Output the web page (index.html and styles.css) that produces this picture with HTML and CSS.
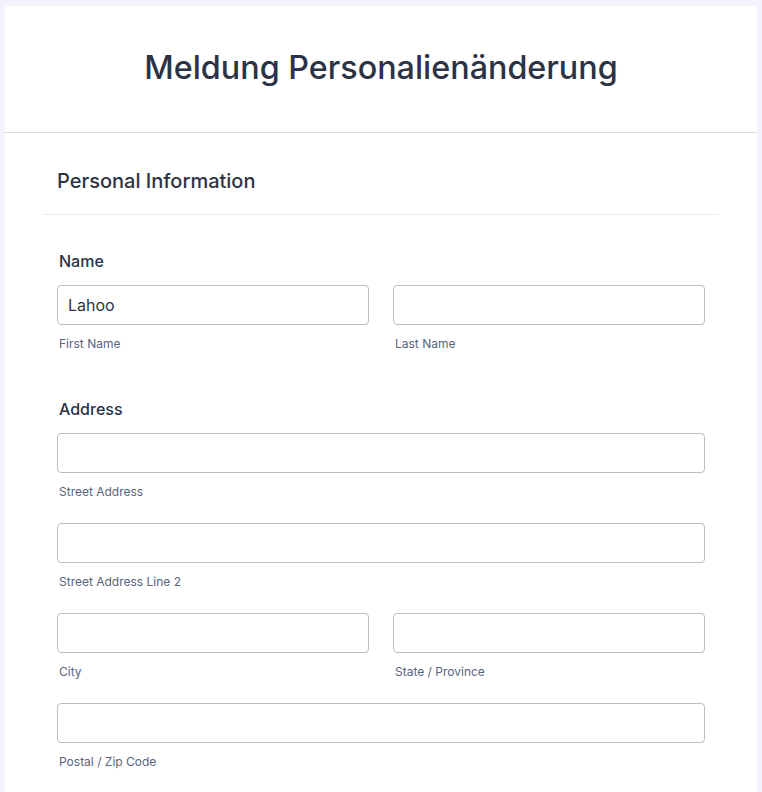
FILE: index.html
```html
<!DOCTYPE html>
<html lang="de">
<head>
    <meta charset="UTF-8">
    <meta name="viewport" content="width=device-width, initial-scale=1.0">
    <title>Meldung Personalienänderung</title>
    <link rel="stylesheet" href="styles.css">
</head>
<body>
    <div class="form-card">
        <div class="form-header">
            <h1>Meldung Personalienänderung</h1>
        </div>

        <div class="form-section">
            <h2 class="section-title">Personal Information</h2>

            <div class="field">
                <label class="field-label">Name</label>
                <div class="input-row">
                    <div class="input-group">
                        <input type="text" value="Lahoo">
                        <span class="sublabel">First Name</span>
                    </div>
                    <div class="input-group">
                        <input type="text">
                        <span class="sublabel">Last Name</span>
                    </div>
                </div>
            </div>

            <div class="field">
                <label class="field-label">Address</label>
                <div class="input-group">
                    <input type="text">
                    <span class="sublabel">Street Address</span>
                </div>
                <div class="input-group">
                    <input type="text">
                    <span class="sublabel">Street Address Line 2</span>
                </div>
                <div class="input-row">
                    <div class="input-group">
                        <input type="text">
                        <span class="sublabel">City</span>
                    </div>
                    <div class="input-group">
                        <input type="text">
                        <span class="sublabel">State / Province</span>
                    </div>
                </div>
                <div class="input-group">
                    <input type="text">
                    <span class="sublabel">Postal / Zip Code</span>
                </div>
            </div>
        </div>
    </div>
</body>
</html>
```

FILE: styles.css
```css
body {
    margin: 0;
    padding: 6px 5px 0;
    background-color: #f3f3fe;
    font-family: Inter, "Noto Sans", sans-serif;
    color: #2c3345;
}
.form-card {
    background: white;
    border-radius: 3px 3px 0 0;
    min-height: 800px;
}
.form-header {
    padding: 42px 38px 44px;
    border-bottom: 1px solid #d8dae9;
    text-align: center;
}
.form-header h1 {
    margin: 0;
    font-size: 32.3px;
    line-height: 40px;
    font-weight: 500;
}
.form-section {
    padding: 36px 38px 0;
}
.section-title {
    margin: 0;
    padding: 0 14px 21px;
    font-size: 20px;
    line-height: 24px;
    font-weight: 500;
    border-bottom: 1px solid #eaebf2;
}
.field {
    padding: 0 14px;
    margin-top: 47px;
}
.section-title + .field {
    margin-top: 36px;
}
.field-label {
    display: block;
    margin: 0 0 14px 2px;
    font-size: 16px;
    line-height: 20px;
    font-weight: 500;
}
.input-row {
    display: grid;
    grid-template-columns: 1fr 1fr;
    gap: 24px;
}
.input-group {
    display: flex;
    flex-direction: column;
}
.field > .input-group + .input-group,
.field > .input-row + .input-group,
.field > .input-group + .input-row {
    margin-top: 23px;
}
input[type="text"] {
    box-sizing: border-box;
    width: 100%;
    height: 40px;
    padding: 0 10px;
    border: 1px solid #b8bdc9;
    border-radius: 4px;
    font-family: inherit;
    font-size: 16px;
    color: #2c3345;
    background: white;
}
.sublabel {
    margin: 11px 0 0 2px;
    font-size: 12px;
    line-height: 16px;
    color: #57647e;
}
```
